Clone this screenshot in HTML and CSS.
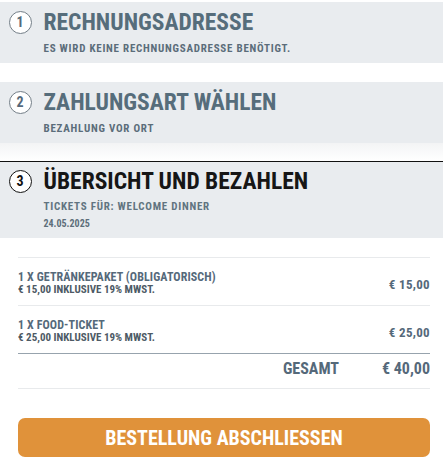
FILE: index.html
```html
<!DOCTYPE html>
<html lang="de">
<head>
    <meta charset="UTF-8">
    <meta name="viewport" content="width=device-width, initial-scale=1.0">
    <title>Checkout</title>
    <link rel="stylesheet" href="styles.css">
</head>
<body>
    <div class="step">
        <span class="step-num">1</span>
        <div class="step-body">
            <h2>Rechnungsadresse</h2>
            <p class="step-info">Es wird keine Rechnungsadresse benötigt.</p>
        </div>
    </div>

    <div class="step">
        <span class="step-num">2</span>
        <div class="step-body">
            <h2>Zahlungsart wählen</h2>
            <p class="step-info">Bezahlung vor Ort</p>
        </div>
    </div>

    <div class="step-fade"></div>

    <div class="step active">
        <span class="step-num">3</span>
        <div class="step-body">
            <h2>Übersicht und bezahlen</h2>
            <p class="step-info">Tickets für: Welcome Dinner</p>
            <p class="step-date">24.05.2025</p>
        </div>
    </div>

    <div class="summary">
        <div class="item">
            <div class="item-text">
                <div class="item-name">1 x Getränkepaket (obligatorisch)</div>
                <div class="item-tax">€ 15,00 inklusive 19% MwSt.</div>
            </div>
            <div class="item-price">€ 15,00</div>
        </div>
        <div class="item">
            <div class="item-text">
                <div class="item-name">1 x Food-Ticket</div>
                <div class="item-tax">€ 25,00 inklusive 19% MwSt.</div>
            </div>
            <div class="item-price">€ 25,00</div>
        </div>
        <div class="total">
            <span class="total-label">Gesamt</span>
            <span class="total-price">€ 40,00</span>
        </div>

        <button class="submit">Bestellung abschliessen</button>
    </div>
</body>
</html>
```

FILE: styles.css
```css
body {
    margin: 0;
    padding-top: 2px;
    font-family: "Roboto Condensed", Roboto, "Liberation Sans", sans-serif;
    font-stretch: 75%;
    text-transform: uppercase;
    background: #fff;
    color: #55697a;
}
h2, p {
    margin: 0;
}
.step {
    display: flex;
    align-items: flex-start;
    background: #e9ecef;
    padding: 7px 10px 7px 8.5px;
}
.step + .step {
    margin-top: 19px;
}
.step-num {
    flex: none;
    width: 21px;
    height: 21px;
    margin-top: 1.5px;
    border: 1.5px solid #737e87;
    border-radius: 50%;
    background: #fff;
    color: #55697a;
    font-size: 14px;
    font-weight: 700;
    line-height: 21px;
    text-align: center;
}
.step-body {
    margin-left: 12px;
}
.step h2 {
    font-size: 23.5px;
    font-weight: 700;
    line-height: 26px;
    color: #566d7b;
}
.step-info {
    margin-top: 7px;
    font-size: 11px;
    font-weight: 700;
    letter-spacing: 0.75px;
    line-height: 14px;
    color: #5b6d7a;
}
.step-fade {
    height: 18px;
    border-bottom: 1.5px solid #111;
    background: linear-gradient(#f3f4f5, #fff);
}
.step.active {
    margin-top: 0;
    padding: 6px 10px 8px 8.5px;
}
.step.active .step-num {
    border-color: #111;
    color: #111;
}
.step.active h2 {
    color: #161616;
}
.step.active .step-info {
    margin-top: 6px;
    color: #617480;
}
.step-date {
    margin-top: 4px;
    font-size: 10px;
    font-weight: 700;
    line-height: 12px;
    color: #5d6e7a;
}
.summary {
    padding: 19px 13px 7px 18px;
}
.item {
    display: flex;
    align-items: center;
    justify-content: space-between;
    padding: 12px 0 9px;
    border-top: 1px solid #e8eaec;
}
.item-name {
    font-size: 12px;
    font-stretch: 100%;
    font-weight: 700;
    letter-spacing: 0.1px;
    line-height: 14px;
}
.item-tax {
    font-size: 11px;
    font-weight: 700;
    line-height: 12px;
    color: #4d5a65;
}
.item-price {
    margin-top: 2px;
    font-size: 13px;
    font-weight: 700;
    letter-spacing: 0.3px;
}
.total {
    display: flex;
    justify-content: flex-end;
    align-items: center;
    padding: 5px 0 9px;
    border-top: 1.5px solid #97a3ad;
    border-bottom: 1px solid #e8eaec;
    font-size: 16px;
    font-weight: 700;
    line-height: 20px;
}
.total-label {
    margin-right: 43px;
}
.submit {
    display: block;
    width: 100%;
    height: 39px;
    margin-top: 29px;
    border: none;
    border-radius: 7px;
    background: #e0923a;
    color: #fff;
    font-family: inherit;
    font-stretch: 75%;
    font-size: 20px;
    font-weight: 700;
    text-transform: uppercase;
    cursor: pointer;
}
```
